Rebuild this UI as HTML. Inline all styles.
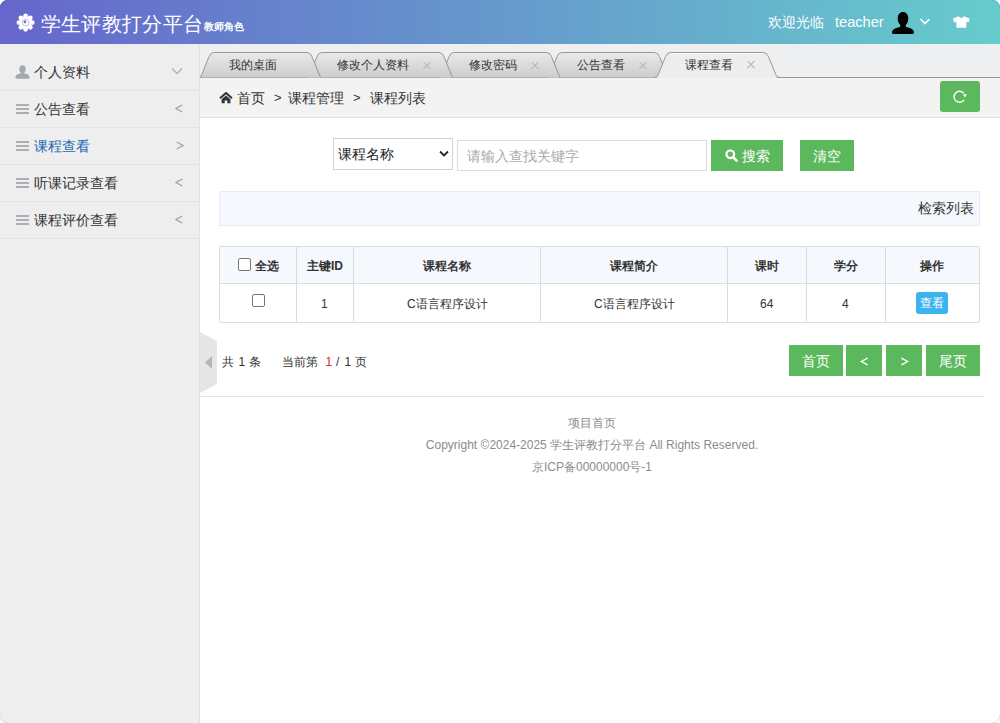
<!DOCTYPE html>
<html><head><meta charset="utf-8">
<style>
*{margin:0;padding:0;box-sizing:border-box}
html,body{width:1000px;height:723px;overflow:hidden;background:#fff;font-family:"Liberation Sans",sans-serif;color:#333}
.abs{position:absolute}
#hdr{position:absolute;left:0;top:0;width:1000px;height:44px;background:linear-gradient(to right,#6666cc,#66cccc)}
#side{position:absolute;left:0;top:44px;width:200px;height:679px;background:#eee;border-right:1px solid #e2e2e2}
.mi{position:absolute;left:0;width:199px;height:37px;border-bottom:1px solid #e3e3e3;font-size:14px;line-height:36px}
.mi .t{position:absolute;left:34px;top:0}
.mi .ar{position:absolute;left:174.5px;top:0;color:#999;font-size:14px}
#tabbar{position:absolute;left:200px;top:44px;width:800px;height:34px;background:#eeeff1}
#crumb{position:absolute;left:200px;top:78px;width:800px;height:40px;background:#f3f3f3;border-bottom:1px solid #e2e2e2;font-size:14px}
.btn{position:absolute;background:#5cb85c;color:#fff;font-size:14px;text-align:center}
.sep{color:#333}
.tl{top:12px;font-size:12px;line-height:18px;color:#333}
.tx{top:16px;width:10px;height:10px}
.tx:before,.tx:after{content:"";position:absolute;left:0px;top:4.5px;width:10px;height:1.2px;background:#b4b4b4;transform:rotate(45deg)}
.tx:after{transform:rotate(-45deg)}
.txa:before,.txa:after{background:#aeb2b6;height:1.3px;top:4.4px}
.hb{position:absolute;left:16px;top:13px;width:12.5px;height:10px;background:linear-gradient(#abafb5 0,#abafb5 1.8px,transparent 1.8px,transparent 4.1px,#abafb5 4.1px,#abafb5 5.9px,transparent 5.9px,transparent 8.2px,#abafb5 8.2px,#abafb5 10px)}

.cr{top:11px;font-size:14px;line-height:18px;color:#333}
.sel{border:1px solid #d2d2d2;background:#fff}
.inp{border:1px solid #ddd;background:#fff}
.vl{top:0;width:1px;height:77px;background:#dcdcdc}
.cb{width:13px;height:13px;border:1px solid #767676;border-radius:2px;background:#fff}
.th{top:10px;font-size:12px;line-height:18px;font-weight:bold;color:#333}
.td{top:48px;font-size:12px;line-height:18px;color:#333}
.pg{top:352.5px;font-size:12px;line-height:18px;color:#333}
.pb{top:345px;height:31px;line-height:32px;font-size:14px}
.ft{left:200px;width:784px;text-align:center;font-size:12px;line-height:19px;color:#8c8c8c}

</style></head><body>
<div id="hdr">
 <svg class="abs" style="left:15.5px;top:12.7px" width="19.2" height="19.2" viewBox="0 0 21 21">
  <g fill="#fff">
   <circle cx="10.5" cy="10.5" r="7"/>
   <circle cx="10.5" cy="3.2" r="2.6"/><circle cx="10.5" cy="17.8" r="2.6"/>
   <circle cx="3.2" cy="10.5" r="2.6"/><circle cx="17.8" cy="10.5" r="2.6"/>
   <circle cx="5.34" cy="5.34" r="2.6"/><circle cx="15.66" cy="5.34" r="2.6"/>
   <circle cx="5.34" cy="15.66" r="2.6"/><circle cx="15.66" cy="15.66" r="2.6"/>
  </g>
  <circle cx="10.5" cy="10.5" r="3.6" fill="none" stroke="#6a6acb" stroke-width="0.8" opacity="0.6"/>
  <circle cx="9.8" cy="9.8" r="1.5" fill="#6a6acb"/>
 </svg>
 <div class="abs" style="left:40.5px;top:9.5px;font-size:20px;letter-spacing:0.35px;line-height:28px;color:#fff">学生评教打分平台</div>
 <div class="abs" style="left:204px;top:19.5px;font-size:10px;line-height:14px;color:#fff;font-weight:bold">教师角色</div>
 <div class="abs" style="left:768px;top:12px;font-size:14px;line-height:20px;color:#fff">欢迎光临</div>
 <div class="abs" style="left:835px;top:12px;font-size:14.6px;line-height:20px;color:#fff">teacher</div>
 <svg class="abs" style="left:891px;top:11px" width="24" height="24" viewBox="0 0 24 24">
  <path fill="#000" d="M12 1c-3 0-5.3 2.500-5.300 6.400 0 2.800 1 5.100 2.500 6.400v2.300C5.300 16.700 1.300 18.200 1 21.300c-.1 1 .5 1.700 1.400 1.700h19.200c.9 0 1.500-.7 1.400-1.700-.3-3.100-4.300-4.600-8.200-5.200v-2.300c1.500-1.300 2.500-3.600 2.500-6.400C17.300 3.500 15 1 12 1z"/>
 </svg>
 <svg class="abs" style="left:919px;top:17px" width="12" height="9" viewBox="0 0 12 9">
  <path d="M1.5 2l4.5 4.5 4.5-4.5" fill="none" stroke="#fff" stroke-width="1.6"/>
 </svg>
 <svg class="abs" style="left:953px;top:16px" width="17" height="12" viewBox="0 0 17 12">
  <path fill="#fff" d="M5.600 .3C6.200 1.400 7.200 1.900 8.300 1.900S10.400 1.400 11 .3l4.900 1.900c.7.3 1 1 .7 1.600L15.400 6.400 13.300 5.700V11.800H3.400V5.700L1.300 6.400 .1 3.800C-.2 3.200.1 2.500.8 2.200z"/>
 </svg>
</div>

<div id="side">
 <div class="mi" style="top:10px">
  <svg class="abs" style="left:15px;top:11px" width="15" height="14" viewBox="0 0 15 14"><path fill="#a4a9b0" d="M7.5 0.3c-2 0-3.2 1.6-3.2 3.6 0 1.5.6 2.8 1.5 3.5v.8C3.3 8.8 1 9.800 .5 11.400c-.2.8.1 2.300.8 2.300h12.400c.7 0 1-1.500.8-2.300-.5-1.600-2.800-2.600-5.300-3.200v-.8c.9-.7 1.500-2 1.500-3.500 0-2-1.200-3.600-3.200-3.600z"/></svg>
  <span class="t">个人资料</span>
  <svg class="abs" style="left:171px;top:13px" width="12" height="8" viewBox="0 0 12 8"><path d="M1 1.5l5 5 5-5" fill="none" stroke="#acacac" stroke-width="1.2"/></svg>
 </div>
 <div class="mi" style="top:47px"><span class="hb"></span><span class="t">公告查看</span><svg class="abs" style="left:175px;top:12.8px" width="8" height="9" viewBox="0 0 8 9"><path d="M7.3 1L1 4.5 7.3 8" fill="none" stroke="#a3a3a3" stroke-width="1.3"/></svg></div>
 <div class="mi" style="top:84px"><span class="hb"></span><span class="t" style="color:#1d66b4">课程查看</span><svg class="abs" style="left:175.5px;top:13px" width="8" height="9" viewBox="0 0 8 9"><path d="M0.7 1L7 4.5 0.7 8" fill="none" stroke="#a3a3a3" stroke-width="1.3"/></svg></div>
 <div class="mi" style="top:121px"><span class="hb"></span><span class="t">听课记录查看</span><svg class="abs" style="left:175px;top:12.8px" width="8" height="9" viewBox="0 0 8 9"><path d="M7.3 1L1 4.5 7.3 8" fill="none" stroke="#a3a3a3" stroke-width="1.3"/></svg></div>
 <div class="mi" style="top:158px"><span class="hb"></span><span class="t">课程评价查看</span><svg class="abs" style="left:175px;top:12.8px" width="8" height="9" viewBox="0 0 8 9"><path d="M7.3 1L1 4.5 7.3 8" fill="none" stroke="#a3a3a3" stroke-width="1.3"/></svg></div>
</div>

<div id="tabbar">
<svg class="abs" style="left:0;top:0" width="800" height="34" viewBox="200 44 800 34">
<defs><linearGradient id="tg" x1="0" y1="0" x2="0" y2="1"><stop offset="0" stop-color="#e9e9e9"/><stop offset="1" stop-color="#cdcdcd"/></linearGradient></defs>
<line x1="200" y1="77.5" x2="1000" y2="77.5" stroke="#969696" stroke-width="1"/>
<path d="M548.5,77.5 L557.07,56.5 Q558.70,52.5 561.90,52.5 L654.60,52.5 Q657.80,52.5 659.43,56.5 L668,77.5 Z" fill="url(#tg)" stroke="none"/>
<path d="M548.5,77.5 L557.07,56.5 Q558.70,52.5 561.90,52.5 L654.60,52.5 Q657.80,52.5 659.43,56.5 L668,77.5" fill="none" stroke="#969696" stroke-width="1"/>
<path d="M440.5,77.5 L449.07,56.5 Q450.70,52.5 453.90,52.5 L546.60,52.5 Q549.80,52.5 551.43,56.5 L560,77.5 Z" fill="url(#tg)" stroke="none"/>
<path d="M440.5,77.5 L449.07,56.5 Q450.70,52.5 453.90,52.5 L546.60,52.5 Q549.80,52.5 551.43,56.5 L560,77.5" fill="none" stroke="#969696" stroke-width="1"/>
<path d="M308.5,77.5 L317.07,56.5 Q318.70,52.5 321.90,52.5 L439.10,52.5 Q442.30,52.5 443.93,56.5 L452.5,77.5 Z" fill="url(#tg)" stroke="none"/>
<path d="M308.5,77.5 L317.07,56.5 Q318.70,52.5 321.90,52.5 L439.10,52.5 Q442.30,52.5 443.93,56.5 L452.5,77.5" fill="none" stroke="#969696" stroke-width="1"/>
<path d="M200.5,77.5 L209.07,56.5 Q210.70,52.5 213.90,52.5 L307.10,52.5 Q310.30,52.5 311.93,56.5 L320.5,77.5 Z" fill="url(#tg)" stroke="none"/>
<path d="M200.5,77.5 L209.07,56.5 Q210.70,52.5 213.90,52.5 L307.10,52.5 Q310.30,52.5 311.93,56.5 L320.5,77.5" fill="none" stroke="#969696" stroke-width="1"/>
<path d="M654,77.5 Q657,77.5 658.02,75.0 L665.57,56.5 Q667.20,52.5 670.40,52.5 L763.60,52.5 Q766.80,52.5 768.43,56.5 L775.98,75.0 Q777,77.5 780,77.5 Z" fill="#ededed" stroke="none"/>
<rect x="658" y="76.5" width="118" height="2" fill="#ededed"/>
<path d="M654,77.5 Q657,77.5 658.02,75.0 L665.57,56.5 Q667.20,52.5 670.40,52.5 L763.60,52.5 Q766.80,52.5 768.43,56.5 L775.98,75.0 Q777,77.5 780,77.5" fill="none" stroke="#969696" stroke-width="1"/>
<line x1="671" y1="53.5" x2="763" y2="53.5" stroke="#fff" stroke-width="1"/>
</svg>
<div class="abs tl" style="left:29px">我的桌面</div>
<div class="abs tl" style="left:137px">修改个人资料</div>
<div class="abs tx" style="left:222px"></div>
<div class="abs tl" style="left:269px">修改密码</div>
<div class="abs tx" style="left:330px"></div>
<div class="abs tl" style="left:377px">公告查看</div>
<div class="abs tx" style="left:438px"></div>
<div class="abs tl" style="left:485px">课程查看</div>
<div class="abs tx txa" style="left:546px"></div>
</div>
<div id="crumb">
 <svg class="abs" style="left:19px;top:14px" width="14" height="12" viewBox="0 0 14 12"><path d="M1 6.2L7 1l6 5.2" fill="none" stroke="#333" stroke-width="2"/><path fill="#333" d="M2.6 7.2L7 3.5l4.4 3.7V11.2H8.3V8.6H5.7V11.2H2.6z"/></svg>
 <div class="abs cr" style="left:37px">首页</div>
 <div class="abs cr" style="left:74px;font-size:13px">&gt;</div>
 <div class="abs cr" style="left:88px">课程管理</div>
 <div class="abs cr" style="left:153px;font-size:13px">&gt;</div>
 <div class="abs cr" style="left:170px">课程列表</div>
 <div class="btn" style="left:740px;top:3px;width:40px;height:31px;border-radius:3px">
  <svg class="abs" style="left:13px;top:9px" width="16" height="16" viewBox="0 0 16 16"><path d="M11.1 9.9A5.5 5.5 0 1 1 10.8 3.3" fill="none" stroke="#fff" stroke-width="1.4"/><path fill="#fff" d="M10 4.3L13.9 4.3 11.9 7.6z"/></svg>
 </div>
</div>
<div id="search">
 <div class="abs sel" style="left:333px;top:138px;width:120px;height:32px">
  <span class="abs" style="left:4px;top:6px;font-size:14px;line-height:18px;color:#222">课程名称</span>
  <svg class="abs" style="left:104.5px;top:11.4px" width="10" height="8" viewBox="0 0 10 8"><path d="M1 1.5l4 4 4-4" fill="none" stroke="#262626" stroke-width="1.8"/></svg>
 </div>
 <div class="abs inp" style="left:457px;top:140px;width:250px;height:31px">
  <span class="abs" style="left:9px;top:6px;font-size:14px;line-height:18px;color:#aaa">请输入查找关键字</span>
 </div>
 <div class="btn" style="left:711px;top:140px;width:72px;height:31px">
  <svg class="abs" style="left:14px;top:9px" width="13" height="13" viewBox="0 0 13 13"><circle cx="5.3" cy="5.3" r="3.8" fill="none" stroke="#fff" stroke-width="2.2"/><path d="M8 8l3.6 3.6" stroke="#fff" stroke-width="2.6" stroke-linecap="round"/></svg>
  <span class="abs" style="left:31px;top:7px;line-height:18px">搜索</span>
 </div>
 <div class="btn" style="left:800px;top:140px;width:54px;height:31px"><span class="abs" style="left:13px;top:7px;line-height:18px">清空</span></div>
</div>
<div class="abs" style="left:219px;top:191px;width:761px;height:35px;background:#f5f9fd;border:1px solid #e6ecf1">
 <span class="abs" style="right:5px;top:7px;font-size:14px;line-height:18px;color:#333">检索列表</span>
</div>
<div class="abs" style="left:219px;top:246px;width:761px;height:77px;border:1px solid #dcdcdc;border-radius:2px;overflow:hidden">
 <div class="abs" style="left:0;top:0;width:761px;height:36px;background:#f5f9fd"></div>
 <div class="abs" style="left:0;top:36px;width:761px;height:1px;background:#dcdcdc"></div>
 <div class="abs vl" style="left:76px"></div>
 <div class="abs vl" style="left:133px"></div>
 <div class="abs vl" style="left:320px"></div>
 <div class="abs vl" style="left:507px"></div>
 <div class="abs vl" style="left:586px"></div>
 <div class="abs vl" style="left:665px"></div>
 <div class="abs cb" style="left:18px;top:11px"></div>
 <div class="abs th" style="left:35px">全选</div>
 <div class="abs th" style="left:87px">主键ID</div>
 <div class="abs th" style="left:203px">课程名称</div>
 <div class="abs th" style="left:390px">课程简介</div>
 <div class="abs th" style="left:535px">课时</div>
 <div class="abs th" style="left:614px">学分</div>
 <div class="abs th" style="left:700px">操作</div>
 <div class="abs cb" style="left:32px;top:47px"></div>
 <div class="abs td" style="left:101px">1</div>
 <div class="abs td" style="left:187px">C语言程序设计</div>
 <div class="abs td" style="left:374px">C语言程序设计</div>
 <div class="abs td" style="left:540px">64</div>
 <div class="abs td" style="left:622px">4</div>
 <div class="abs" style="left:696px;top:45px;width:32px;height:22px;background:#3bb3ee;border-radius:3px;color:#fff;font-size:12px;line-height:23px;text-align:center">查看</div>
</div>
<div class="abs" style="left:200px;top:332px;width:18px;height:61px">
 <svg class="abs" style="left:0;top:0" width="18" height="61" viewBox="0 0 18 61"><path d="M0 0L17 9V52L0 61z" fill="#e6e6e6"/><path d="M5 30.5L12 24V37z" fill="#b5b5b5"/></svg>
</div>
<div class="abs pg" style="left:222px">共</div><div class="abs pg" style="left:238.5px">1</div><div class="abs pg" style="left:249px">条</div>
<div class="abs pg" style="left:282px">当前第</div><div class="abs pg" style="left:325.5px;color:#e0282e">1</div><div class="abs pg" style="left:336px">/</div><div class="abs pg" style="left:344.5px">1</div><div class="abs pg" style="left:355px">页</div>
<div class="btn pb" style="left:789px;width:54px">首页</div>
<div class="btn pb" style="left:846px;width:36px"><svg class="abs" style="left:14px;top:12px" width="9" height="9" viewBox="0 0 9 9"><path d="M7.6 1.2L1.4 4.5 7.6 7.8" fill="none" stroke="#fff" stroke-width="1.4"/></svg></div>
<div class="btn pb" style="left:886px;width:36px"><svg class="abs" style="left:14px;top:12px" width="9" height="9" viewBox="0 0 9 9"><path d="M1.4 1.2L7.6 4.5 1.4 7.8" fill="none" stroke="#fff" stroke-width="1.4"/></svg></div>
<div class="btn pb" style="left:926px;width:54px">尾页</div>
<div class="abs" style="left:200px;top:396px;width:784px;height:1px;background:#e5e5e5"></div>
<div class="abs ft" style="top:414px">项目首页</div>
<div class="abs ft" style="top:436px">Copyright ©2024-2025 学生评教打分平台 All Rights Reserved.</div>
<div class="abs ft" style="top:458px">京ICP备00000000号-1</div>


<svg class="abs" style="left:0;top:0" width="10" height="10" viewBox="0 0 10 10"><path d="M0 0H7.5A7.5 7.5 0 0 0 0 7.5z" fill="#fff"/><path d="M7.5 0.5A7 7 0 0 0 0.5 7.5" fill="none" stroke="#5252a8" stroke-width="1" opacity="0.7"/></svg>
<svg class="abs" style="left:990px;top:0" width="10" height="10" viewBox="0 0 10 10"><path d="M10 0H2.5A7.5 7.5 0 0 1 10 7.5z" fill="#fff"/><path d="M2.5 0.5A7 7 0 0 1 9.5 7.5" fill="none" stroke="#4aa8a8" stroke-width="1" opacity="0.7"/></svg>
<svg class="abs" style="left:0;top:713px" width="10" height="10" viewBox="0 0 10 10"><path d="M0 2A8 8 0 0 0 8 10H0z" fill="#fafafa"/><path d="M0 2A8 8 0 0 0 8 10" fill="none" stroke="#dcdcdc" stroke-width="1"/></svg>
<svg class="abs" style="left:990px;top:713px" width="10" height="10" viewBox="0 0 10 10"><path d="M10 2A8 8 0 0 1 2 10H10z" fill="#fff"/><path d="M10 2A8 8 0 0 1 2 10" fill="none" stroke="#dcdcdc" stroke-width="1"/></svg>
</body></html>
